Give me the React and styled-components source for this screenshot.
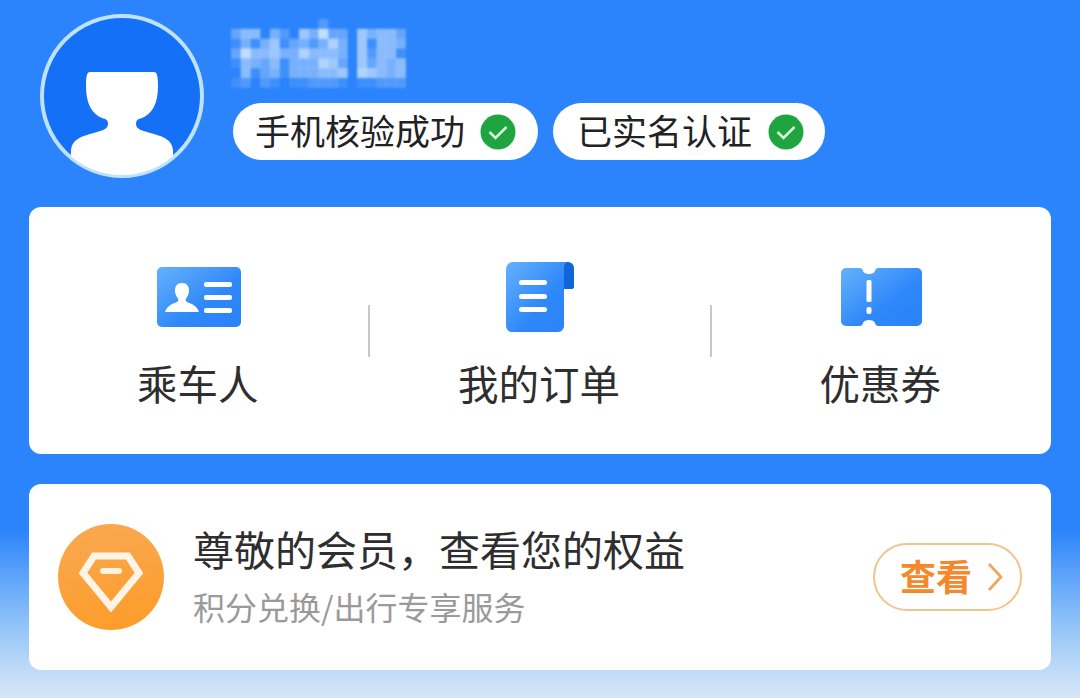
import React from 'react';
import styled, { createGlobalStyle } from 'styled-components';

const mosaic = [
  [0, 0, 0, 0, 0, 0, 0, 0, 0, 2, 0, 0, 0, 0, 0, 0, 0, 0],
  [3, 5, 5, 0, 4, 2, 0, 6, 4, 8, 3, 3, 0, 6, 4, 5, 5, 3],
  [1, 4, 1, 4, 6, 1, 3, 4, 2, 4, 7, 4, 0, 6, 1, 5, 5, 4],
  [3, 8, 5, 5, 6, 4, 4, 7, 5, 5, 5, 4, 0, 6, 2, 5, 5, 1],
  [1, 5, 4, 3, 5, 1, 4, 4, 4, 7, 6, 3, 0, 6, 3, 5, 4, 5],
  [0, 5, 1, 3, 4, 1, 4, 4, 4, 5, 5, 6, 0, 7, 6, 5, 4, 5],
  [1, 2, 0, 2, 1, 0, 1, 1, 2, 2, 2, 1, 0, 1, 1, 2, 2, 2],
];

const App = () => {
  return (
    <Page>
      <GlobalStyle />
      <Header>
        <Avatar />
        <Profile>
          <NameMosaic />
          <Badges>
            <Badge><BadgeText>手机核验成功</BadgeText><CheckIcon /></Badge>
            <Badge $loose><BadgeText>已实名认证</BadgeText><CheckIcon /></Badge>
          </Badges>
        </Profile>
      </Header>

      <MenuCard>
        <MenuItem>
          <IconSlot><IdCardIcon /></IconSlot>
          <MenuLabel>乘车人</MenuLabel>
        </MenuItem>
        <Divider />
        <MenuItem>
          <IconSlot><OrderIcon /></IconSlot>
          <MenuLabel>我的订单</MenuLabel>
        </MenuItem>
        <Divider />
        <MenuItem>
          <IconSlot><TicketIcon /></IconSlot>
          <MenuLabel>优惠券</MenuLabel>
        </MenuItem>
      </MenuCard>

      <MemberCard>
        <DiamondIcon />
        <MemberText>
          <MemberTitle>尊敬的会员，查看您的权益</MemberTitle>
          <MemberSub>积分兑换/出行专享服务</MemberSub>
        </MemberText>
        <ViewButton>
          <ViewText>查看</ViewText>
          <svg width="16" height="30" viewBox="0 0 16 30" fill="none">
            <path d="M2 2l12 13L2 28" stroke="#eba95c" strokeWidth="2.8" />
          </svg>
        </ViewButton>
      </MemberCard>
    </Page>
  );
};

export default App;

const Avatar = () => (
  <svg width="164" height="164" viewBox="0 0 164 164">
    <defs>
      <clipPath id="avatarClip">
        <circle cx="82" cy="82" r="79" />
      </clipPath>
    </defs>
    <circle cx="82" cy="82" r="80" fill="#1470f6" stroke="#bfe2fb" strokeWidth="4" />
    <path
      clipPath="url(#avatarClip)"
      fill="#fff"
      d="M50 58H114C117 58 118 62 118 72C118 90 112 100 102 104C98 105 96 106 96 110C96 116 104 117 114 120C124 123 132 126 133 136L134 170H30L31 136C32 126 40 123 50 120C60 117 68 116 68 110C68 106 66 105 62 104C52 100 46 90 46 72C46 62 47 58 50 58Z"
    />
  </svg>
);

const NameMosaic = () => (
  <MosaicSvg width="176" height="70" viewBox="0 0 176 70">
    {mosaic.map((row, y) =>
      row.map((v, x) => (
        <rect key={`${x}-${y}`} x={x * 9.7} y={y * 9.8} width="10" height="10" fill="#eaf4ff" opacity={v * 0.1} />
      ))
    )}
  </MosaicSvg>
);

const CheckIcon = () => (
  <svg width="36" height="36" viewBox="0 0 36 36">
    <circle cx="18" cy="18" r="17.5" fill="#1fa53f" />
    <path d="M9.5 18l6 6 11-11" fill="none" stroke="#d8f3dc" strokeWidth="2.6" />
  </svg>
);

const IconGradient = ({ id }) => (
  <defs>
    <linearGradient id={id} x1="0" y1="0" x2="1" y2="1">
      <stop offset="0" stopColor="#64b1fb" />
      <stop offset="0.6" stopColor="#2f88f9" />
      <stop offset="1" stopColor="#2a82f8" />
    </linearGradient>
  </defs>
);

const IdCardIcon = () => (
  <svg width="84" height="60" viewBox="0 0 84 60">
    <IconGradient id="cardFill" />
    <rect width="84" height="60" rx="5" fill="url(#cardFill)" />
    <path
      fill="#fff"
      d="M25 16c5 0 7 3.500 7 7.500 0 3.500-1.500 6-3 8-1 2 0 3 2 4 3 1 9 3 11 9.500H8c2-6.500 8-8.500 11-9.500 2-1 3-2 2-4-1.500-2-3-4.500-3-8 0-4 2-7.500 7-7.500Z"
    />
    <rect x="47" y="15" width="28" height="5" rx="2" fill="#fff" />
    <rect x="47" y="28" width="28" height="5" rx="2" fill="#fff" />
    <rect x="47" y="41" width="28" height="5" rx="2" fill="#fff" />
  </svg>
);

const OrderIcon = () => (
  <svg width="70" height="70" viewBox="0 0 70 70">
    <IconGradient id="orderFill" />
    <path d="M56 0h7a6 6 0 0 1 6 6v19a2 2 0 0 1-2 2h-11Z" fill="#0f66d8" />
    <path d="M8 0H62a7 7 0 0 0-3 6V64a6 6 0 0 1-6 6H7a6 6 0 0 1-6-6V7a7 7 0 0 1 7-7Z" fill="url(#orderFill)" />
    <rect x="14" y="18" width="28" height="5" rx="2.5" fill="#fff" />
    <rect x="14" y="32" width="28" height="5" rx="2.5" fill="#fff" />
    <rect x="14" y="45" width="28" height="5" rx="2.5" fill="#fff" />
  </svg>
);

const TicketIcon = () => (
  <svg width="81" height="58" viewBox="0 0 81 58">
    <IconGradient id="ticketFill" />
    <path
      d="M5 0H18C21 0 21.500 1 22 3C23 7 33 7 34 3C34.500 1 35 0 38 0H76a5 5 0 0 1 5 5V53a5 5 0 0 1-5 5H38C35 58 34.500 57 34 55C33 51 23 51 22 55C21.500 57 21 58 18 58H5a5 5 0 0 1-5-5V5a5 5 0 0 1 5-5Z"
      fill="url(#ticketFill)"
    />
    <rect x="25.500" y="12" width="5" height="22" rx="1.500" fill="#fff" />
    <rect x="25.500" y="39" width="5" height="7" rx="2" fill="#fff" />
  </svg>
);

const DiamondIcon = () => (
  <svg width="106" height="106" viewBox="0 0 106 106">
    <defs>
      <linearGradient id="orangeFill" x1="0.3" y1="0" x2="0.5" y2="1">
        <stop offset="0" stopColor="#f9a851" />
        <stop offset="1" stopColor="#fd9d2a" />
      </linearGradient>
    </defs>
    <circle cx="53" cy="53" r="53" fill="url(#orangeFill)" />
    <path d="M36 32H70L81 49 53 83 25 49Z" fill="none" stroke="#fff4e6" strokeWidth="7" />
    <rect x="42" y="44" width="22" height="6" rx="3" fill="#fff1de" />
  </svg>
);

const GlobalStyle = createGlobalStyle`
  html, body {
    margin: 0;
    padding: 0;
  }

  body {
    font-family: "Noto Sans CJK SC", "Noto Sans", sans-serif;
  }
`;

const Page = styled.div`
  width: 1080px;
  height: 698px;
  overflow: hidden;
  box-sizing: border-box;
  padding: 14px 29px 0;
  background: linear-gradient(180deg, #2b84fb 0, #2b84fb 530px, #62a6fb 580px, #96c6f8 630px, #bfdaf7 670px, #d6e6f8 698px);
`;

const Header = styled.div`
  display: flex;
  gap: 29px;
  padding-left: 11px;
`;

const Profile = styled.div`
  display: flex;
  flex-direction: column;
  padding-top: 5px;
  gap: 14px;
`;

const MosaicSvg = styled.svg`
  margin-left: -2px;
  filter: blur(1px);
`;

const Badges = styled.div`
  display: flex;
  gap: 15px;
`;

const Badge = styled.div`
  display: flex;
  align-items: center;
  gap: ${(props) => (props.$loose ? '16px' : '15px')};
  height: 57px;
  padding: 0 ${(props) => (props.$loose ? '21px' : '22px')} 0 ${(props) => (props.$loose ? '24px' : '22px')};
  border-radius: 29px;
  background: #fff;
  color: #222;
  font-size: 35px;
  white-space: nowrap;
`;

const BadgeText = styled.span`
  padding-bottom: 5px;
`;

const MenuCard = styled.div`
  display: flex;
  align-items: flex-start;
  height: 247px;
  margin-top: 29px;
  box-sizing: border-box;
  padding-top: 55px;
  border-radius: 12px;
  background: #fff;
`;

const MenuItem = styled.div`
  flex: 1;
  display: flex;
  flex-direction: column;
  align-items: center;
  gap: 30px;
`;

const IconSlot = styled.div`
  height: 70px;
  display: flex;
  align-items: center;
  justify-content: center;
`;

const MenuLabel = styled.div`
  color: #2e2e2e;
  font-size: 40.5px;
  line-height: 41px;
  margin-right: 2px;
`;

const Divider = styled.div`
  width: 2px;
  height: 52px;
  margin-top: 43px;
  background: #c6c8ca;
`;

const MemberCard = styled.div`
  display: flex;
  align-items: center;
  height: 186px;
  margin-top: 30px;
  box-sizing: border-box;
  padding: 0 29px;
  border-radius: 12px;
  background: #fff;
`;

const MemberText = styled.div`
  flex: 1;
  display: flex;
  flex-direction: column;
  gap: 18px;
  margin-left: 29px;
  padding-bottom: 5px;
`;

const MemberTitle = styled.div`
  color: #2e2e2e;
  font-size: 41px;
  line-height: 44px;
`;

const MemberSub = styled.div`
  color: #9a9a9a;
  font-size: 32px;
  line-height: 36px;
`;

const ViewButton = styled.div`
  display: flex;
  align-items: center;
  gap: 15px;
  height: 68px;
  width: 149px;
  box-sizing: border-box;
  padding-left: 25px;
  border: 2px solid #f0c48f;
  border-radius: 34px;
  color: #f5882a;
  font-size: 36px;
  font-weight: 700;
`;

const ViewText = styled.span`
  padding-bottom: 5px;
`;
